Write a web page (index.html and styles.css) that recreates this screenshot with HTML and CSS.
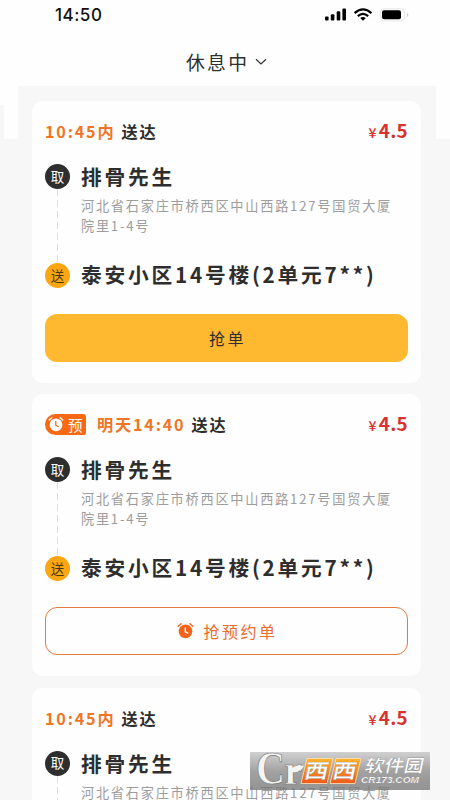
FILE: index.html
```html
<!DOCTYPE html>
<html lang="zh-CN">
<head>
<meta charset="utf-8">
<title>休息中</title>
<link rel="stylesheet" href="styles.css">
</head>
<body>
<svg class="defs" width="0" height="0" aria-hidden="true">
  <symbol id="alarm" viewBox="0 0 16 16">
    <circle cx="8" cy="8.8" r="6.4" fill="currentColor"/>
    <path d="M1.2 4 3.8 1.7M14.8 4 12.2 1.7" fill="none" stroke="currentColor" stroke-width="1.3" stroke-linecap="round"/>
    <path class="hands" d="M7.8 5.7v3.5l2.4 1.3" fill="none" stroke-width="1.3" stroke-linecap="round"/>
  </symbol>
</svg>
<div class="screen">
  <header class="top">
    <div class="status">
      <span class="clock">14:50</span>
      <svg class="signals" width="84" height="14" viewBox="0 0 84 14">
        <g fill="#000"><rect x="0" y="8.5" width="3.6" height="4" rx="1"/><rect x="5.8" y="6.3" width="3.6" height="6.2" rx="1"/><rect x="11.7" y="3.3" width="3.6" height="9.2" rx="1"/><rect x="17.4" y="0.5" width="3.6" height="12" rx="1"/></g>
        <g fill="none" stroke="#000" stroke-width="2.2"><path d="M29.6 5.1q8.4-7.5 16.8 0"/><path d="M32.8 8.1q5.2-4.6 10.4 0"/></g>
        <path d="M35.2 10q2.8-2.2 5.6 0L38 12.8z"/>
        <rect x="55.4" y=".8" width="24.4" height="12" rx="3.5" fill="none" stroke="#e0e0e0" stroke-width=".8"/>
        <rect x="57" y="2.3" width="19" height="9" rx="2"/>
        <path d="M82 5v4q1.3-.6 1.3-2T82 5" fill="#ccc"/>
      </svg>
    </div>
    <div class="state">休息中<svg class="chevron" width="12" height="8" viewBox="0 0 12 8"><path d="M1 1.2 6 6l5-4.8" fill="none" stroke="#333" stroke-width="1.2"/></svg></div>
  </header>
  <div class="edge edge-left"></div>
  <div class="edge edge-sliver"></div>
  <div class="edge edge-right"></div>
  <main class="orders">
    <section class="card">
      <div class="head"><span class="when">10:45内</span><span class="arrive">送达</span><span class="price"><small>¥</small>4.5</span></div>
      <div class="route">
        <div class="rail"><i class="dot pick">取</i><i class="line"></i><i class="dot drop">送</i></div>
        <div class="stops"><h2>排骨先生</h2><p>河北省石家庄市桥西区中山西路127号国贸大厦<br>院里1-4号</p><h2 class="dest">泰安小区14号楼(2单元7**)</h2></div>
      </div>
      <div class="button solid">抢单</div>
    </section>
    <section class="card">
      <div class="head"><span class="tag"><svg width="16" height="16"><use href="#alarm"/></svg>预</span><span class="when">明天14:40</span><span class="arrive">送达</span><span class="price"><small>¥</small>4.5</span></div>
      <div class="route">
        <div class="rail"><i class="dot pick">取</i><i class="line"></i><i class="dot drop">送</i></div>
        <div class="stops"><h2>排骨先生</h2><p>河北省石家庄市桥西区中山西路127号国贸大厦<br>院里1-4号</p><h2 class="dest">泰安小区14号楼(2单元7**)</h2></div>
      </div>
      <div class="button outline"><svg width="17" height="17"><use href="#alarm"/></svg>抢预约单</div>
    </section>
    <section class="card">
      <div class="head"><span class="when">10:45内</span><span class="arrive">送达</span><span class="price"><small>¥</small>4.5</span></div>
      <div class="route">
        <div class="rail"><i class="dot pick">取</i><i class="line"></i></div>
        <div class="stops"><h2>排骨先生</h2><p>河北省石家庄市桥西区中山西路127号国贸大厦</p></div>
      </div>
    </section>
  </main>
  <svg class="mark" width="180" height="38" viewBox="0 0 180 38">
    <defs>
      <linearGradient id="gray" x2="0" y2="1"><stop offset="0" stop-color="#c8c8c8" stop-opacity=".85"/><stop offset=".5" stop-color="#989898" stop-opacity=".9"/><stop offset="1" stop-color="#727272" stop-opacity=".75"/></linearGradient>
      <linearGradient id="fire" x2="0" y2="1"><stop offset="0" stop-color="#ffb52d"/><stop offset="1" stop-color="#f0591b"/></linearGradient>
    </defs>
    <rect width="180" height="38" fill="url(#gray)"/>
    <g class="mark-cr"><text x="6" y="32" font-size="47" textLength="29" lengthAdjust="spacingAndGlyphs">C</text><text x="34" y="32" font-size="40" textLength="18" lengthAdjust="spacingAndGlyphs">r</text></g>
    <path class="leaf" d="M40 19q4-7 14-5-4 7-12 6z"/>
    <path d="M57 6.500H83L77 31.500H51zM86 6.500H111L105 31.500H80z" fill="url(#fire)" stroke="#ffe5bb" stroke-width=".8"/>
    <g class="mark-cn" transform="skewX(-12)"><text x="59" y="26.500" font-size="20" textLength="24" lengthAdjust="spacingAndGlyphs">西</text><text x="87" y="26.500" font-size="20" textLength="24" lengthAdjust="spacingAndGlyphs">西</text><text x="118" y="20" font-size="17.500" textLength="59" lengthAdjust="spacingAndGlyphs">软件园</text></g>
    <text class="mark-url" x="111" y="31" textLength="58" lengthAdjust="spacingAndGlyphs">CR173.COM</text>
  </svg>
</div>
</body>
</html>
```

FILE: styles.css
```css
* { box-sizing: border-box; }
body { margin: 0; font-family: "Noto Sans CJK SC", sans-serif; color: #2e2e2e; }
.defs { position: absolute; }
.screen { position: relative; width: 450px; height: 800px; overflow: hidden; background: #f7f7f7; }
.top { height: 86px; background: #fefefe; }
.status { display: flex; justify-content: space-between; height: 38px; padding: 8px 41px 0 55px; }
.clock { font: 500 17px/15px Inter, sans-serif; color: #111; letter-spacing: .5px; }
.signals { display: block; }
.state { display: flex; align-items: center; padding-left: 186px; height: 47px; font-size: 18.8px; letter-spacing: 2.3px; }
.chevron { margin-left: 6px; }
.edge { position: absolute; background: #fefefe; }
.edge-left { left: 4px; top: 86px; width: 14px; height: 53px; }
.edge-sliver { left: 0; top: 86px; width: 4px; height: 19px; }
.edge-right { left: 436px; top: 86px; width: 14px; height: 53px; }
.orders { display: flex; flex-direction: column; gap: 11.4px; padding: 15px 29px 0 32px; }
.card { height: 282px; flex: none; padding: 18px 13px 19px; border-radius: 11px; background: #fefefe; }
.head { display: flex; align-items: center; height: 24px; font-size: 16.2px; font-weight: 700; letter-spacing: 1.8px; }
.when { color: #f07527; margin-right: 6px; }
.price { margin-left: auto; color: #d8312f; font-size: 18.8px; line-height: 24px; letter-spacing: .3px; }
.price small { font-size: 14px; margin-right: 2px; font-weight: 500; }
.tag { display: flex; align-items: center; width: 41px; height: 21px; padding-left: 3px; margin-right: 11px; border-radius: 11px 3px 3px 11px; background: #f76913; color: #fff; font-size: 14.5px; font-weight: 400; letter-spacing: 0; }
.tag svg { margin-right: 4px; flex: none; --hand: #f76913; }
.hands { stroke: var(--hand, #fefefe); }
.route { display: flex; gap: 11px; margin-top: 21px; height: 125px; }
.rail { display: flex; flex-direction: column; align-items: center; width: 25px; }
.dot { display: flex; align-items: center; justify-content: center; flex: none; width: 25px; height: 25px; border-radius: 50%; font: 13.5px/25px "Noto Sans CJK SC", sans-serif; padding-bottom: 1px; }
.pick { background: #2e2e2e; color: #fff; }
.drop { background: #fba612; color: #493713; }
.line { width: 1px; height: 74px; background: repeating-linear-gradient(#dedede 0 7px, transparent 7px 11px); }
.stops { margin-top: -1px; }
.stops h2 { margin: 0; font-size: 20.7px; font-weight: 700; line-height: 26px; letter-spacing: 2.8px; white-space: nowrap; }
.stops p { margin: 7px 0 0; font-size: 13.2px; line-height: 19.5px; letter-spacing: 1.75px; color: #9d9d9d; white-space: nowrap; }
.stops .dest { margin-top: 26px; }
.button { display: flex; align-items: center; justify-content: center; height: 48px; margin-top: 25px; padding-left: 2px; border-radius: 12px; font-size: 16px; letter-spacing: 2.5px; }
.solid { background: #feb931; padding-bottom: 1px; }
.outline { border: 1.4px solid #e27b3b; color: #ee6c29; padding-bottom: 1px; }
.outline svg { margin-right: 9px; color: #f76319; }
.mark { position: absolute; left: 250px; top: 752px; overflow: visible; }
.mark-cr { font-family: "Liberation Serif", serif; font-weight: 700; fill: #f4f4f4; stroke: #777; stroke-width: .7; }
.leaf { fill: #f4f4f4; }
.mark-cn { font-family: "Noto Sans CJK SC", sans-serif; font-weight: 700; fill: #fff; stroke: #777; stroke-width: .3; }
.mark-url { font: italic 700 9px "Liberation Sans", sans-serif; fill: #fff; stroke: #777; stroke-width: .2; }
```
